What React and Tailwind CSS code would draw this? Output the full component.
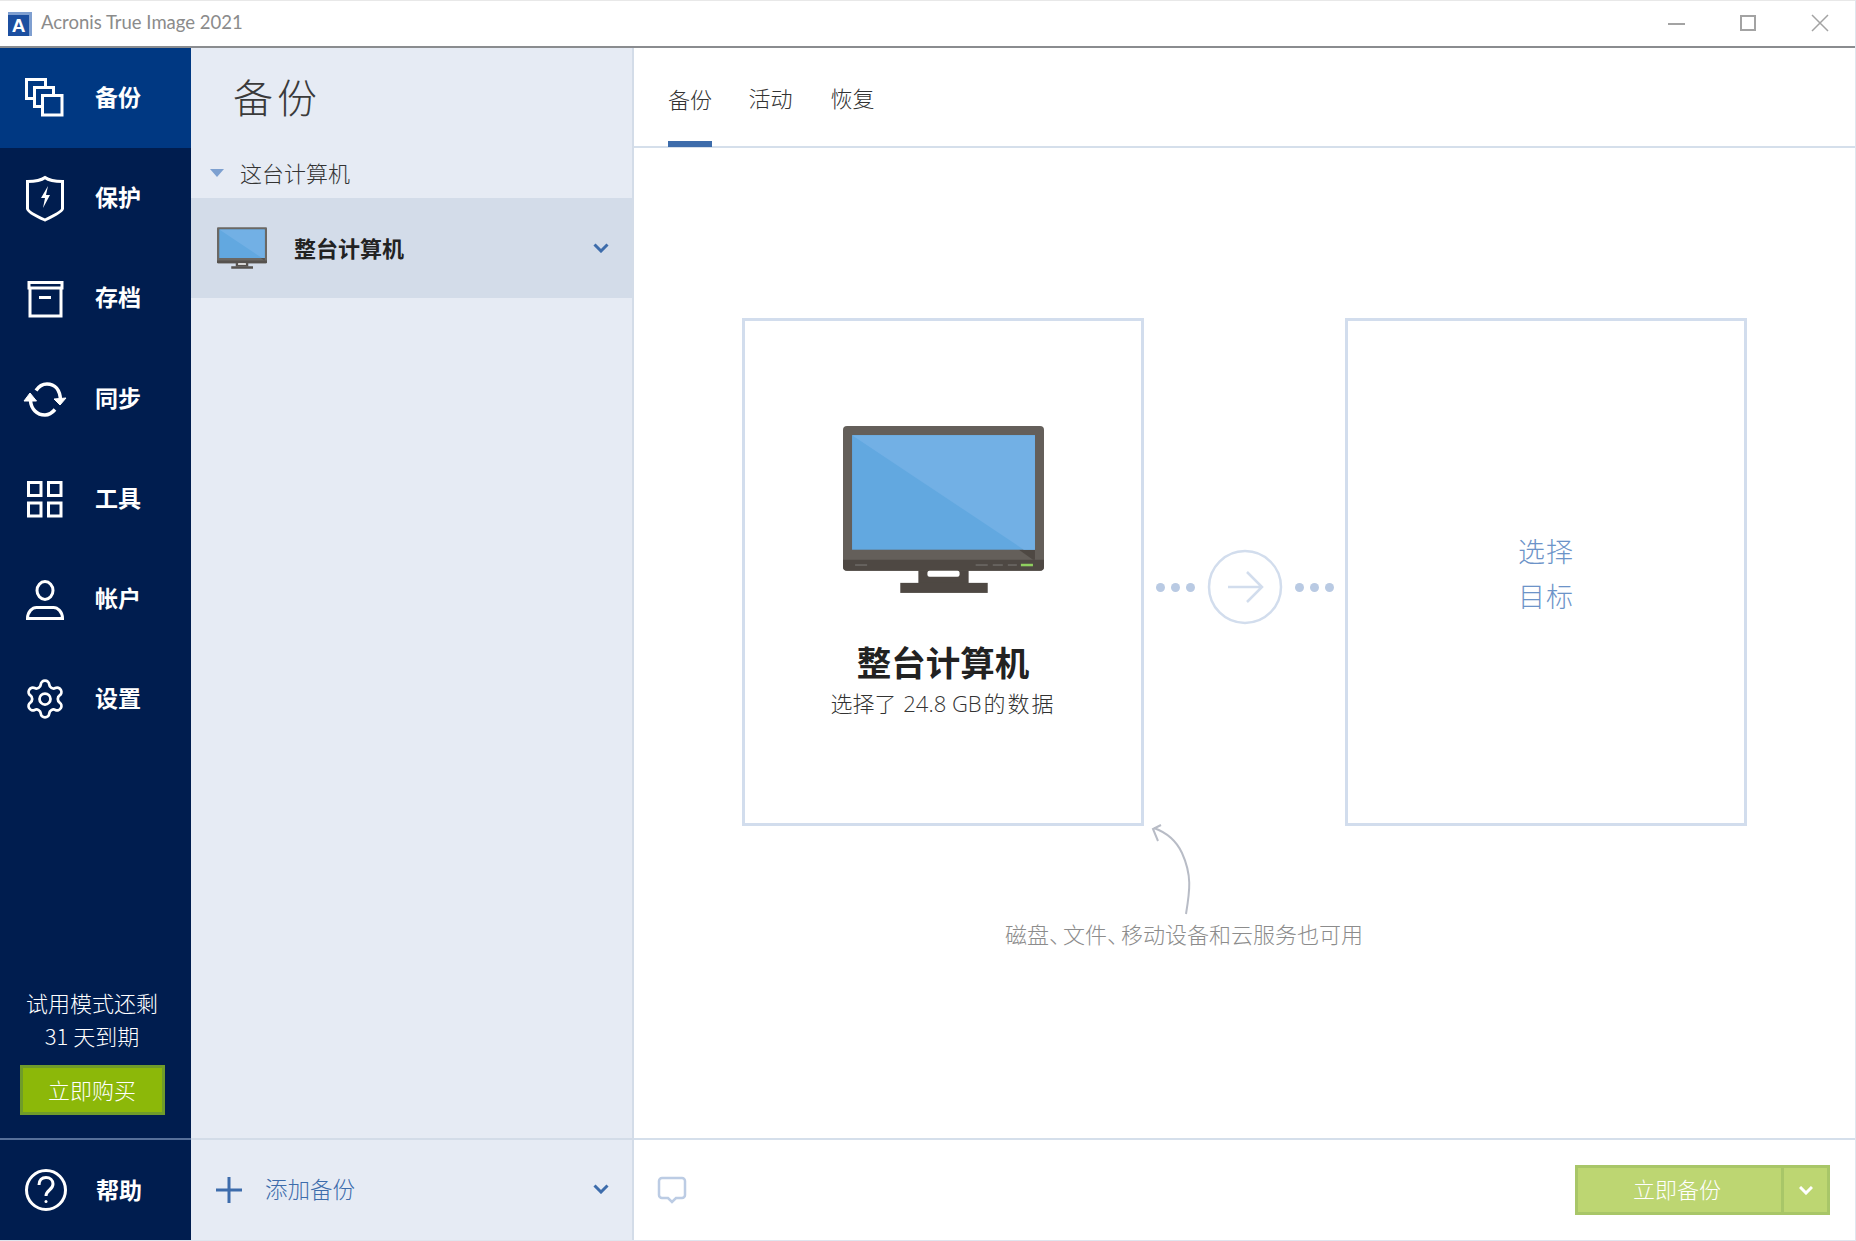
import React from "react";
import { Settings } from "lucide-react";

const Box = ({ w = 40, h = 40, children, className = "" }) => (
  <svg width={w} height={h} viewBox={`0 0 ${w} ${h}`} fill="none" stroke="currentColor" strokeWidth="3" className={`shrink-0 ${className}`}>
    {children}
  </svg>
);

const BackupIcon = () => (
  <Box>
    <path d="M1.500 1.500h19v19h-19z" fill="#003882" />
    <path d="M9.500 9.500h19v19h-19z" fill="#003882" />
    <path d="M17.500 17.500h19.500v19.500H17.500z" fill="#003882" />
  </Box>
);
const ShieldIcon = () => (
  <Box h={48}>
    <path d="M20 3.500c4 3 8 4 17.500 4v27c0 3-10 8-17.500 11.500C12 42.500 2.500 37.500 2.500 34.500v-27C12 7.500 16 6.500 20 3.500z" />
    <path d="M23 12l-7 12h4l-2 10 7-13h-4z" fill="currentColor" stroke="none" />
  </Box>
);
const ArchiveIcon = () => (
  <Box>
    <path d="M4 3.500h33v5.500H4zM5 9v28h31V9M14 18.500h12" />
  </Box>
);
const SyncIcon = () => (
  <Box w={44} className="-ml-[2px]">
    <path d="M13 11.500C16 7 20 5 24 5c8 0 13 6 13.500 16" strokeWidth="3.500" />
    <path d="M7.500 21.500C8 30 14 36 22 36c4 0 7-2 10-5.500" strokeWidth="3.500" />
    <path d="M31 20l12 -1-6 7z M7 14l6.500 8H1z" fill="currentColor" stroke="currentColor" strokeWidth="1" />
  </Box>
);
const ToolsIcon = () => (
  <Box>
    <path d="M3.500 3.500h12.500v13H3.500zM23.500 3.500H36v13H23.500zM3.500 24H16v13H3.500zM23.500 24H36v13H23.500z" />
  </Box>
);
const AccountIcon = () => (
  <Box>
    <ellipse cx="20" cy="10.500" rx="8" ry="9" />
    <path d="M2.500 38.500c0-7 5-11 9-11h17c4 0 9 4 9 11z" />
  </Box>
);
const NavChevron = ({ className = "" }) => (
  <svg width="16" height="10" viewBox="0 0 16 10" fill="none" stroke="#3d6cab" strokeWidth="3" className={className}>
    <path d="M1.500 1.500L8 8l6.500-6.500" />
  </svg>
);

const Monitor = ({ className, bezel = "#645f5a", dark = "#4e4843", small = false }) => (
  <svg viewBox="0 0 200 166" className={className}>
    <rect x="75" y="141" width="50" height="16" fill={dark} />
    <rect x="57" y="156" width="87" height="10" fill={dark} />
    <rect x="0" y="0" width="200" height="144" rx="4" fill={bezel} />
    <path d="M0 133h200v7a4 4 0 0 1-4 4H4a4 4 0 0 1-4-4z" fill={dark} />
    <path d="M175 123h16v10h-2z" fill={dark} />
    <rect x="84" y="144" width="32" height="6" fill="#fff" rx="2" />
    <rect x="9" y="9" width="182" height="114" fill="#62a8e0" />
    <path d="M9 9h182v114h-11z" fill="#72b0e5" />
    {!small && (
      <g>
        <rect x="177" y="137" width="12" height="2.500" fill="#8fcf5f" />
        <rect x="132" y="137.500" width="12" height="1.500" fill="#6d6a66" />
        <rect x="149" y="137.500" width="10" height="1.500" fill="#6d6a66" />
        <rect x="164" y="137.500" width="9" height="1.500" fill="#6d6a66" />
        <rect x="12" y="137.500" width="12" height="1.500" fill="#6d6a66" />
      </g>
    )}
  </svg>
);

const navItems = [
  { label: "备份", icon: <BackupIcon />, active: true },
  { label: "保护", icon: <ShieldIcon /> },
  { label: "存档", icon: <ArchiveIcon /> },
  { label: "同步", icon: <SyncIcon /> },
  { label: "工具", icon: <ToolsIcon /> },
  { label: "帐户", icon: <AccountIcon /> },
  { label: "设置", icon: <Settings size={44} strokeWidth={1.500} className="shrink-0 -ml-[2px] -mt-[2px]" /> },
];

const Dots = () => (
  <div className="flex gap-[6px]">
    <span className="w-[9px] h-[9px] rounded-full bg-[#b9cae3]" />
    <span className="w-[9px] h-[9px] rounded-full bg-[#b9cae3]" />
    <span className="w-[9px] h-[9px] rounded-full bg-[#b9cae3]" />
  </div>
);

export default function App() {
  return (
    <div
      className="w-[1856px] h-[1241px] flex flex-col bg-white overflow-hidden border-b border-r border-[#dfe5ee] text-[22px] leading-none"
      style={{ fontFamily: '"Noto Sans CJK SC", "Noto Sans", sans-serif' }}
    >
      {/* Title bar */}
      <div className="h-[48px] shrink-0 flex items-center border-b-2 border-[#8a8c8f] border-t border-t-[#e8e8e8] pl-[8px]">
        <div className="w-[24px] h-[24px] bg-[#1c4fa0] border-r-[3px] border-t-[3px] border-[#7f9fd0] flex items-center justify-center text-white font-bold text-[19px]" style={{ fontFamily: '"Liberation Sans", sans-serif' }}>
          A
        </div>
        <span className="ml-[9px] pb-[2px] text-[#8b8b8b] text-[18.500px]" style={{ fontFamily: 'Lato, sans-serif' }}>Acronis True Image 2021</span>
        <div className="ml-auto flex items-center text-[#a3a3a3]">
          <div className="w-[17px] h-[2px] bg-[#a3a3a3] mr-[55px]" />
          <div className="w-[16px] h-[16px] border-2 border-[#a3a3a3] mr-[55px] -mt-[2px]" />
          <svg width="18" height="18" viewBox="0 0 18 18" stroke="#a3a3a3" strokeWidth="1.500" className="mr-[26px] -mt-[2px]"><path d="M1 1l16 16M17 1L1 17" /></svg>
        </div>
      </div>

      <div className="flex-1 flex min-h-0">
        {/* Sidebar */}
        <aside className="w-[191px] shrink-0 bg-[#001d4f] text-white flex flex-col">
          {navItems.map((it) => (
            <div key={it.label} className={`h-[100.300px] shrink-0 flex items-center pl-[25px] ${it.active ? "bg-[#003882]" : ""}`}>
              <div className="w-[70px] flex items-center">{it.icon}</div>
              <span className="font-bold text-[23px] pb-[4px]">{it.label}</span>
            </div>
          ))}
          <div className="flex-1" />
          <div className="flex flex-col items-center text-[22px] w-[184px]">
            <div className="mb-[11px] font-light">试用模式还剩</div>
            <div className="mb-[19px] font-light">31 天到期</div>
            <div className="w-[145px] h-[50px] flex items-center justify-center bg-[#8cb809] border-[3px] border-[#6f9c2a] font-light pb-[2px]">立即购买</div>
          </div>
          <div className="h-[102px] mt-[23px] shrink-0 border-t-2 border-[#566f99] flex items-center pl-[24px]">
            <svg width="44" height="44" viewBox="0 0 44 44" fill="none" stroke="#fff" strokeWidth="3" className="shrink-0">
              <circle cx="22" cy="22" r="19.500" />
              <path d="M15 17c0-5 3-7.500 7-7.500s7 2.500 7 6.500c0 6-7 6-7 12" />
              <circle cx="22" cy="33.500" r="1.500" fill="#fff" stroke="none" />
            </svg>
            <span className="ml-[28px] font-bold text-[23px] pb-[2px]">帮助</span>
          </div>
        </aside>

        {/* Panel */}
        <section className="w-[443px] shrink-0 bg-[#e6ebf4] border-r-2 border-[#d3dce8] flex flex-col">
          <div className="h-[100px] shrink-0 flex items-center pl-[42px] pb-[4px] text-[#3a3a3a] text-[40px] tracking-[4px] font-light">备份</div>
          <div className="h-[50px] shrink-0 flex items-center pl-[19px] text-[#333]">
            <div className="w-0 h-0 border-l-[7px] border-r-[7px] border-t-[8px] border-l-transparent border-r-transparent border-t-[#7da0d0] mr-[16px]" />
            <span className="font-light pb-[2px]">这台计算机</span>
          </div>
          <div className="h-[100px] shrink-0 bg-[#d3dce9] flex items-center pl-[26px] pr-[23px]">
            <Monitor className="w-[50px] h-[46px] shrink-0" bezel="#6b6864" dark="#56524e" small />
            <span className="ml-[27px] font-bold text-[#222] pb-[2px]">整台计算机</span>
            <NavChevron className="ml-auto" />
          </div>
          <div className="flex-1" />
          <div className="h-[102px] shrink-0 border-t-2 border-[#d3dce8] flex items-center pl-[25px] pr-[23px] text-[#3d6cab]">
            <svg width="26" height="26" viewBox="0 0 26 26" stroke="#3d6cab" strokeWidth="3"><path d="M13 0v26M0 13h26" /></svg>
            <span className="ml-[23px] font-light pb-[4px] text-[22.500px]">添加备份</span>
            <NavChevron className="ml-auto -mt-[2px]" />
          </div>
        </section>

        {/* Main */}
        <main className="flex-1 min-w-0 flex flex-col">
          <div className="h-[100px] shrink-0 border-b-2 border-[#d5dfeb] flex items-stretch pl-[34px] text-[#333]">
            <div className="w-[44px] flex items-center justify-center border-b-[6px] border-[#3d6cab] -mb-[1px] pt-[6px] font-light">备份</div>
            <div className="ml-[36px] w-[45px] flex items-center justify-center font-light">活动</div>
            <div className="ml-[37px] w-[45px] flex items-center justify-center font-light">恢复</div>
          </div>

          <div className="flex-1 min-h-0 flex flex-col">
            <div className="mt-[170px] ml-[108px] flex items-center">
              <div className="w-[402px] h-[508px] border-[3px] border-[#d2dded] flex flex-col items-center">
                <Monitor className="mt-[105px] w-[201px] h-[167px]" />
                <div className="mt-[51px] text-[34.500px] font-bold text-[#222]">整台计算机</div>
                <div className="mt-[12px] text-[22px] text-[#333] font-light">选择了 <span className="ml-[2px] -mr-[3px]" style={{ fontFamily: '"Open Sans", sans-serif' }}>24.8 GB</span> <span className="tracking-[2px]">的数据</span></div>
              </div>
              <div className="w-[201px] mt-[30px] flex items-center justify-center gap-[12px]">
                <Dots />
                <svg width="76" height="76" viewBox="0 0 76 76" fill="none" stroke="#d2dded" strokeWidth="2.500">
                  <circle cx="38" cy="38" r="36" />
                  <path d="M21 38h34M40 23l15 15-15 15" />
                </svg>
                <Dots />
              </div>
              <div className="w-[402px] h-[508px] border-[3px] border-[#d2dded] flex flex-col items-center pt-[216px] text-[#6c93c8] text-[27px] font-light tracking-[1px]">
                <div>选择</div>
                <div className="mt-[18px]">目标</div>
              </div>
            </div>
            <div className="relative ml-[108px] h-[96px]">
              <svg width="50" height="92" viewBox="0 0 50 92" fill="none" stroke="#b8bcc6" strokeWidth="2" className="absolute left-[403px] -top-[2px]">
                <path d="M41 90c4-24 6-39-4-61C31 16 20 8 9 4" />
                <path d="M16 1L8 5l5 12" />
              </svg>
            </div>
            <div className="ml-[371px] text-[#8c8c8c] font-light">磁盘<span className="tracking-[-8px]">、</span>文件<span className="tracking-[-8px]">、</span>移动设备和云服务也可用</div>
          </div>

          <div className="h-[102px] shrink-0 border-t-2 border-[#d5dfeb] flex items-center pl-[23px] pr-[25px]">
            <svg width="30" height="28" viewBox="0 0 30 28" fill="none" stroke="#bccce4" strokeWidth="2.500">
              <path d="M5 2h20a3 3 0 0 1 3 3v14a3 3 0 0 1-3 3h-6l-4 4-4-4H5a3 3 0 0 1-3-3V5a3 3 0 0 1 3-3z" />
            </svg>
            <div className="ml-auto flex h-[50px] w-[255px] bg-[#bdd672] border-[3px] border-[#a8c668] text-white">
              <div className="flex-1 flex items-center justify-center font-light pb-[5px] pr-[5px]">立即备份</div>
              <div className="w-[46px] border-l-[3px] border-[#a8c668] flex items-center justify-center">
                <svg width="14" height="9" viewBox="0 0 14 9" fill="none" stroke="#fff" strokeWidth="3"><path d="M1 1l6 6 6-6" /></svg>
              </div>
            </div>
          </div>
        </main>
      </div>
    </div>
  );
}
